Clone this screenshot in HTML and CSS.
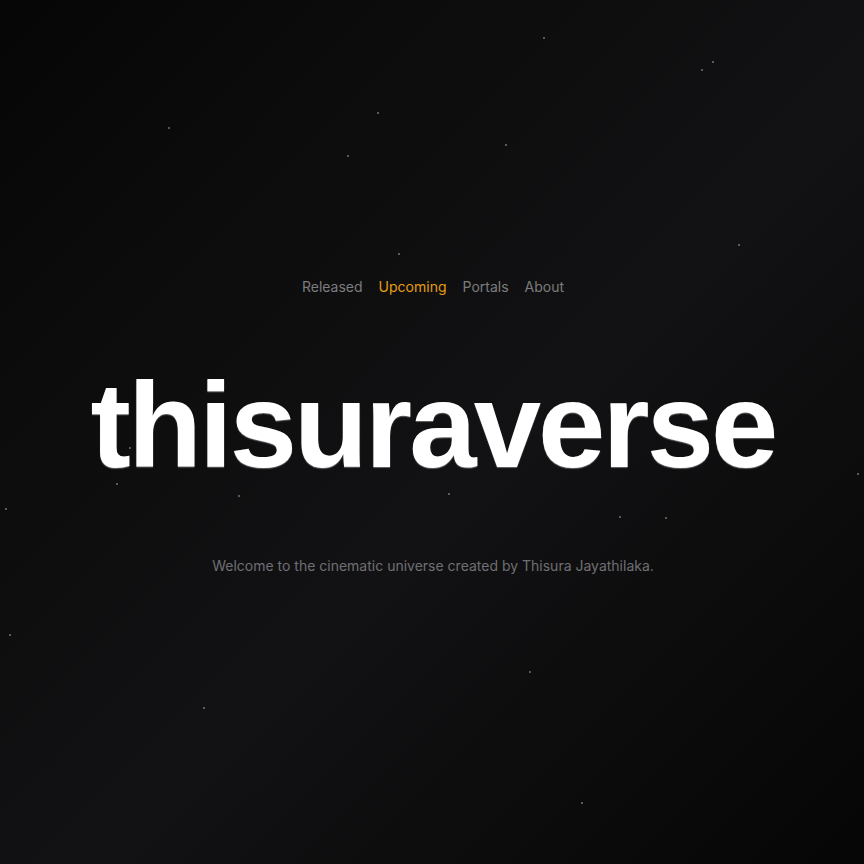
FILE: index.html
```html
<!DOCTYPE html>
<html lang="en">
<head>
<meta charset="utf-8">
<title>thisuraverse</title>
<link rel="stylesheet" href="styles.css">
</head>
<body>
<div class="sky">
  <span class="star" style="left:543px;top:37px"></span>
  <span class="star" style="left:712px;top:61px"></span>
  <span class="star" style="left:701px;top:69px"></span>
  <span class="star" style="left:377px;top:112px"></span>
  <span class="star" style="left:168px;top:127px"></span>
  <span class="star" style="left:505px;top:144px"></span>
  <span class="star" style="left:347px;top:155px"></span>
  <span class="star" style="left:738px;top:244px"></span>
  <span class="star" style="left:398px;top:253px"></span>
  <span class="star" style="left:129px;top:447px"></span>
  <span class="star" style="left:116px;top:483px"></span>
  <span class="star" style="left:238px;top:495px"></span>
  <span class="star" style="left:448px;top:493px"></span>
  <span class="star" style="left:857px;top:473px"></span>
  <span class="star" style="left:5px;top:508px"></span>
  <span class="star" style="left:619px;top:516px"></span>
  <span class="star" style="left:665px;top:517px"></span>
  <span class="star" style="left:9px;top:634px"></span>
  <span class="star" style="left:529px;top:671px"></span>
  <span class="star" style="left:203px;top:707px"></span>
  <span class="star" style="left:581px;top:802px"></span>
</div>
<main class="hero">
  <nav class="nav">
    <a class="nav-link" href="#">Released</a>
    <a class="nav-link active" href="#">Upcoming</a>
    <a class="nav-link" href="#">Portals</a>
    <a class="nav-link" href="#">About</a>
  </nav>
  <h1 class="title">thisuraverse</h1>
  <p class="tagline">Welcome to the cinematic universe created by Thisura Jayathilaka.</p>
</main>
</body>
</html>
```
FILE: styles.css
```css
* { box-sizing: border-box; }
html, body { margin: 0; padding: 0; height: 100%; }
body {
  background: linear-gradient(135deg, #060606 0%, #0d0d0e 30%, #121214 55%, #0b0b0c 80%, #060606 100%);
  font-family: Inter, "Liberation Sans", sans-serif;
  overflow: hidden;
  position: relative;
}
.sky { position: absolute; inset: 0; pointer-events: none; }
.star {
  position: absolute;
  width: 2px;
  height: 2px;
  border-radius: 50%;
  background: rgba(200, 200, 205, 0.55);
}
.hero {
  position: relative;
  min-height: 100vh;
  display: flex;
  flex-direction: column;
  align-items: center;
  padding-top: 277px;
  padding-left: 2px;
}
.nav {
  display: flex;
  gap: 16px;
}
.nav-link {
  color: #7c7c7e;
  text-decoration: none;
  font-size: 14px;
  line-height: 20px;
}
.nav-link.active { color: #e59d12; }
.title {
  margin: 68px 0 0;
  font-family: "Liberation Sans", Arial, sans-serif;
  font-weight: 700;
  font-size: 121px;
  line-height: 1;
  letter-spacing: -0.024em;
  color: #ffffff;
  text-shadow: 0 1px 1px rgba(140, 140, 145, 0.7);
}
.tagline {
  margin: 70px 0 0;
  color: #6f6f73;
  font-size: 14px;
  line-height: 20px;
}
```
